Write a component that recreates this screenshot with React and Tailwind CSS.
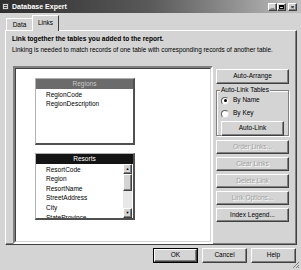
// Database Expert dialog (Windows classic look, grayscale)
const FONT = "font-['Liberation_Sans',Arial,sans-serif]";

// ─── Botão 3D clássico ───────────────────────────────────────────────────────
function Btn({ children, disabled, def, className = '' }) {
  return (
    <div className={`flex bg-[#d4d4d4] ${def ? 'border border-black' : ''} ${className}`}>
      <div
        className={`flex-1 flex items-center justify-center border border-t-white border-l-white border-r-[#404040] border-b-[#404040] shadow-[inset_-1px_-1px_0_#808080] text-[6.5px] leading-none ${
          disabled ? 'text-[#a0a0a0] [text-shadow:1px_1px_0_#ffffff]' : 'text-black'
        }`}
      >
        {children}
      </div>
    </div>
  );
}

// ─── Radio ───────────────────────────────────────────────────────────────────
function Radio({ label, checked }) {
  return (
    <div className="flex items-center gap-[4px] h-[13px]">
      <div className="w-[8px] h-[8px] rounded-full bg-white border border-t-[#606060] border-l-[#606060] border-r-[#e0e0e0] border-b-[#e0e0e0] flex items-center justify-center">
        {checked && <div className="w-[3px] h-[3px] rounded-full bg-black" />}
      </div>
      <span className="text-[6.5px] leading-none text-black">{label}</span>
    </div>
  );
}

// ─── Caixa de tabela no canvas ───────────────────────────────────────────────
function TableBox({ title, fields, dark, scroll }) {
  return (
    <div className="w-[100px] h-[67px] flex flex-col bg-white border-t border-l border-t-[#b0b0b0] border-l-[#b0b0b0] border-r-2 border-b-2 border-r-[#505050] border-b-[#505050]">
      <div
        className={`h-[10px] flex items-center justify-center text-[6.5px] leading-none ${
          dark ? 'bg-[#141414] text-white' : 'bg-[#6b6b6b] text-[#c8c8c8]'
        }`}
      >
        {title}
      </div>
      <div className="flex-1 flex min-h-0">
        <div className="flex-1 overflow-hidden pl-[10px] pt-[1px]">
          {fields.map((f) => (
            <div key={f} className="h-[9.6px] flex items-center text-[6.5px] leading-none text-black whitespace-nowrap">
              {f}
            </div>
          ))}
        </div>
        {scroll && (
          <div className="w-[9px] mr-[1px] flex flex-col bg-[#e8e8e8]">
            <Btn className="h-[10px]">
              <span className="text-[4px]">▲</span>
            </Btn>
            <Btn className="h-[17px]"> </Btn>
            <div className="flex-1" />
            <Btn className="h-[10px]">
              <span className="text-[4px]">▼</span>
            </Btn>
          </div>
        )}
      </div>
    </div>
  );
}

export default function App() {
  return (
    <div className={`relative w-[301px] h-[270px] bg-[#d4d4d4] flex flex-col overflow-hidden ${FONT}`}>
      {/* Barra de título */}
      <div className="h-[13px] flex items-center px-[2px] bg-gradient-to-r from-[#2e2e2e] via-[#5a5a5a] to-[#c0c0c0]">
        <div className="w-[7px] h-[7px] bg-[#d0d0d0] border border-[#404040] mr-[3px] flex flex-col justify-center gap-[1px] px-[1px]">
          <div className="h-px bg-[#404040]" />
          <div className="h-px bg-[#404040]" />
        </div>
        <span className="text-[7px] font-bold text-white leading-none">Database Expert</span>
        <div className="flex-1" />
        <div className="flex gap-0 mr-[2px]">
          <Btn className="w-[9px] h-[8px]">
            <span className="text-[6px] leading-none -mt-[2px]">_</span>
          </Btn>
          <Btn className="w-[9px] h-[8px]">
            <div className="w-[5px] h-[4px] border border-black border-t-2" />
          </Btn>
          <Btn className="w-[9px] h-[8px] ml-[2px]">
            <span className="text-[6px] font-bold leading-none">×</span>
          </Btn>
        </div>
      </div>

      {/* Abas */}
      <div className="h-[16px] flex items-end pl-[6px] mt-[1px]">
        <div className="w-[26px] h-[12px] flex items-center justify-center text-[6.5px] border-t border-l border-t-white border-l-white rounded-tl-[1px] mb-0">
          Data
        </div>
        <div className="w-[27px] h-[16px] -mb-px relative z-10 flex items-center justify-center text-[6.5px] bg-[#d4d4d4] border-t border-l border-r border-t-white border-l-white border-r-[#404040] pb-[2px]">
          Links
        </div>
      </div>

      {/* Painel da aba */}
      <div className="mx-[5px] w-[292px] h-[215px] flex flex-col border border-t-white border-l-white border-r-[#404040] border-b-[#404040] shadow-[inset_-1px_-1px_0_#808080] pl-[6px]">
        <div className="mt-[4px] h-[9px] flex items-center text-[6.6px] font-bold leading-none">
          Link together the tables you added to the report.
        </div>
        <div className="mt-[2px] h-[9px] flex items-center text-[6.4px] leading-none whitespace-nowrap">
          Linking is needed to match records of one table with corresponding records of another table.
        </div>

        <div className="mt-[12px] flex gap-[3px]">
          {/* Canvas */}
          <div className="w-[200px] h-[178px] ml-[1px] border-2 border-t-[#808080] border-l-[#808080] border-r-white border-b-white">
            <div className="w-full h-full bg-white border border-t-[#404040] border-l-[#404040] border-r-[#d4d4d4] border-b-[#d4d4d4] pl-[19px] pt-[9px] flex flex-col gap-[8px]">
              <TableBox title="Regions" fields={['RegionCode', 'RegionDescription']} />
              <TableBox
                title="Resorts"
                dark
                scroll
                fields={['ResortCode', 'Region', 'ResortName', 'StreetAddress', 'City', 'StateProvince']}
              />
            </div>
          </div>

          {/* Coluna de botões */}
          <div className="w-[73px] pt-[3px] flex flex-col">
            <Btn className="h-[15px]">Auto-Arrange</Btn>

            <div className="relative mt-[6px] h-[46px] border border-[#808080] shadow-[inset_1px_1px_0_#ffffff,1px_1px_0_#ffffff] px-[4px] pt-[3px]">
              <span className="absolute -top-[4px] left-[3px] px-[1px] bg-[#d4d4d4] text-[6.5px] leading-none">
                Auto-Link Tables
              </span>
              <Radio label="By Name" checked />
              <Radio label="By Key" />
              <Btn className="h-[15px] mt-[1px]">Auto-Link</Btn>
            </div>

            <div className="mt-[4px] flex flex-col gap-[3px]">
              <Btn className="h-[14px]" disabled>Order Links...</Btn>
              <Btn className="h-[14px]" disabled>Clear Links</Btn>
              <Btn className="h-[14px]" disabled>Delete Link</Btn>
              <Btn className="h-[14px]" disabled>Link Options...</Btn>
              <Btn className="h-[14px]">Index Legend...</Btn>
            </div>
          </div>
        </div>
      </div>

      {/* Botões inferiores */}
      <div className="mt-[3px] flex justify-end gap-[4px] pr-[5px]">
        <Btn className="w-[45px] h-[15px]" def>OK</Btn>
        <Btn className="w-[45px] h-[15px]">Cancel</Btn>
        <Btn className="w-[45px] h-[15px]">Help</Btn>
      </div>

      {/* Alça de redimensionar */}
      <svg width="8" height="8" viewBox="0 0 8 8" className="absolute right-[1px] bottom-[1px]">
        <path d="M7 1L1 7M7 4L4 7M7 6L6 7" stroke="#808080" strokeWidth="1" />
      </svg>
    </div>
  );
}
